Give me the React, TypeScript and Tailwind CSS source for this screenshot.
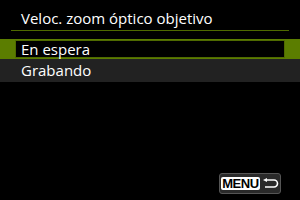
import React from "react";

export default function App() {
  return (
    <div className="w-[300px] h-[200px] bg-black relative overflow-hidden" style={{ fontFamily: '"Open Sans", "Noto Sans", sans-serif' }}>
      <div className="pt-[8px] px-[11px]">
        <div className="pl-[10px] text-white text-[15px] leading-[20px] h-[22px]">Veloc. zoom óptico objetivo</div>
        <div className="h-px bg-[#4f6a00]" />
      </div>
      <div className="mt-[8px]">
        <div className="h-[20px] bg-[#5b7d00] px-[15px] py-px">
          <div className="h-[18px] bg-black border border-[#4f6a00] pl-[5px] text-white text-[15px] leading-[16px] flex items-center">En espera</div>
        </div>
        <div className="h-[23px] bg-[#222222] pl-[21px] text-white text-[15px] flex items-center">Grabando</div>
      </div>
      <div className="absolute left-[219px] top-[173px] w-[62px] h-[21px] rounded-[3px] bg-[#2a2a2a] border border-[#555] flex items-center pl-[1px] gap-[2px]">
        <div className="bg-white text-black font-bold text-[13px] leading-[13px] h-[13px] w-[39px] justify-center rounded-[2px] flex items-center" style={{ fontFamily: '"Liberation Sans", sans-serif', letterSpacing: '-0.4px' }}>MENU</div>
        <svg width="17" height="12" viewBox="0 0 17 12">
          <path d="M4 2 H12 A3.5 3.5 0 0 1 12 9 H3" fill="none" stroke="white" strokeWidth="1.6" />
          <path d="M1 2 L5 0 L5 4 Z" fill="white" />
        </svg>
      </div>
    </div>
  );
}
